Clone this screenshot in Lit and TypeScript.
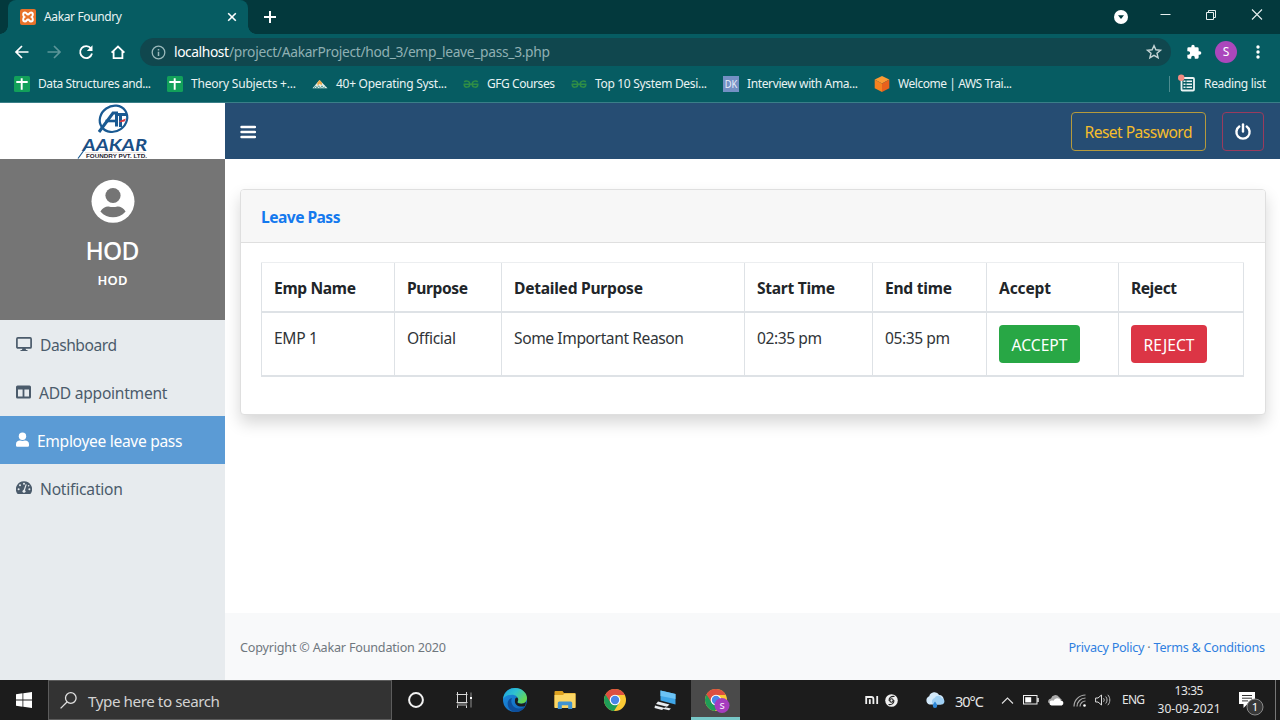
import { LitElement, html, css, svg } from "lit";
import { customElement, property } from "lit/decorators.js";
import { classMap } from "lit/directives/class-map.js";

/** A single line of text whose tracking is tuned to fill a given width. */
@customElement("ui-label")
class UiLabel extends LitElement {
  @property({ type: Number }) w = 0;
  @property() text = "";

  static styles = css`
    :host { display: inline-block; white-space: pre; }
    .t { display: inline-block; }
  `;

  updated() {
    const t = this.renderRoot.querySelector(".t") as HTMLElement;
    t.style.letterSpacing = "0px";
    const natural = t.getBoundingClientRect().width;
    const gaps = Math.max(1, this.text.length - 1);
    t.style.letterSpacing = `${(this.w - natural) / gaps}px`;
    this.style.width = `${this.w}px`;
  }

  render() {
    return html`<span class="t">${this.text}</span>`;
  }
}

const sheetIcon = svg`<rect width="16" height="16" rx="1.5" fill="#12a05a"/><path d="M2.300 6h11.400M7.700 2.300v11.400" stroke="#fff" stroke-width="1.900"/>`;
const gfgIcon = svg`<g fill="none" stroke="#2f8d46" stroke-width="1.500"><path d="M.5 8.300h15M1.300 6C2.500 4.300 6.800 4.600 6.800 8.200c0 3.700-5.200 3.900-5.600.6M14.700 6C13.500 4.300 9.200 4.600 9.200 8.200c0 3.700 5.200 3.900 5.600.6"/></g>`;
const hillIcon = svg`<path d="M0.500 12.300L7.500 4 15.500 12.300z" fill="#e8efe9"/><path d="M5.200 6.800l2.400-2.800 2.500 2.800-.5 2.500-2-1.500-2 2z" fill="#e9a94b"/><path d="M2 12.300l1.600-2.400L5 12.300l1.700-2.600 1.700 2.600 1.600-2.500 1.700 2.500 1.300-1.800" fill="none" stroke="#4f9a96" stroke-width=".9"/>`;
const dkIcon = svg`<rect width="16" height="16" fill="#7490c4"/><text x="8" y="12" text-anchor="middle" font-family="Noto Sans, sans-serif" font-size="10" textLength="12.500" lengthAdjust="spacingAndGlyphs" fill="#e8eefa">DK</text>`;
const awsIcon = svg`<path d="M8 0l7.300 3.600L8 7.400.7 3.600z" fill="#fb9a33"/><path d="M.7 3.600L8 7.400V16L.7 12.200z" fill="#f58220"/><path d="M15.300 3.600L8 7.400V16l7.300-3.800z" fill="#e8611c"/>`;

const bookmarks = [
  { icon: sheetIcon, text: "Data Structures and...", w: 113 },
  { icon: sheetIcon, text: "Theory Subjects +...", w: 105 },
  { icon: hillIcon, text: "40+ Operating Syst...", w: 111 },
  { icon: gfgIcon, text: "GFG Courses", w: 68 },
  { icon: gfgIcon, text: "Top 10 System Desi...", w: 112 },
  { icon: dkIcon, text: "Interview with Ama...", w: 111 },
  { icon: awsIcon, text: "Welcome | AWS Trai...", w: 114 },
];

@customElement("browser-chrome")
class BrowserChrome extends LitElement {
  static styles = css`
    :host { display: block; color: #e9f3f3; font: 12px/16px "Noto Sans", "Open Sans", sans-serif; }
    svg { display: block; flex: none; overflow: visible; }
    .strip { height: 34px; background: #03393d; display: flex; align-items: stretch; padding-left: 8px; }
    .tab { box-sizing: border-box; width: 240px; background: #065c62; border-radius: 8px 8px 0 0; display: flex; align-items: center; padding: 0 10px 0 12px; position: relative; }
    .tab::before, .tab::after { content: ""; position: absolute; bottom: 0; width: 8px; height: 8px; }
    .tab::before { left: -8px; background: radial-gradient(circle at 0 0, #03393d 7.5px, #065c62 8px); }
    .tab::after { right: -8px; background: radial-gradient(circle at 100% 0, #03393d 7.5px, #065c62 8px); }
    .tab ui-label { margin-left: 8px; font-size: 12px; }
    .close { margin-left: auto; }
    .plus { margin: 10px 0 0 15px; }
    .win { margin-left: auto; display: flex; }
    .slot { width: 46px; display: grid; place-items: center; height: 30px; }
    .bar { height: 36px; background: #065c62; display: flex; align-items: center; padding-left: 6px; }
    .btn { width: 32px; display: grid; place-items: center; }
    .omni { box-sizing: border-box; margin-left: 6px; width: 1031px; height: 28px; border-radius: 14px; background: #10474e; display: flex; align-items: center; padding: 0 9px 0 11px; font-size: 13.800px; color: #8fb0b3; }
    .host { margin-left: 8px; color: #fff; }
    .star { margin-left: auto; }
    .right { display: flex; align-items: center; padding-left: 7px; }
    .avatar { width: 22px; height: 22px; border-radius: 50%; background: #ab47bc; color: #fff; display: grid; place-items: center; font-size: 12px; }
    .marks { box-sizing: border-box; height: 33px; background: #065c62; border-bottom: 1px solid #3a7f88; display: flex; align-items: center; gap: 16px; padding: 0 14px 5px 14px; font-size: 12px; }
    .mark { display: flex; align-items: center; gap: 8px; }
    .reading { margin-left: auto; display: flex; align-items: center; }
    .reading ui-label { margin-left: 8px; }
    .sep { width: 1px; height: 16px; background: #4d8c90; margin-right: 8px; }
  `;

  render() {
    return html`
      <div class="strip">
        <div class="tab">
          <svg width="16" height="16" viewBox="0 0 16 16"><rect width="16" height="16" rx="2" fill="#e8722a"/><path d="M5 3.600C2.600 3.600 2.800 7 4.300 8 2.800 9 2.600 12.400 5 12.400c1.800 0 1.600-2 3-2s1.200 2 3 2c2.400 0 2.200-3.400.7-4.400 1.500-1 1.700-4.400-.7-4.400-1.800 0-1.600 2-3 2s-1.200-2-3-2z" fill="none" stroke="#fff" stroke-width="2"/></svg>
          <ui-label .w=${78} .text=${"Aakar Foundry"}></ui-label>
          <svg class="close" width="12" height="12" viewBox="0 0 12 12"><path d="M2.200 2.200l7.600 7.600M9.800 2.200L2.200 9.800" stroke="#fff" stroke-width="1.600"/></svg>
        </div>
        <svg class="plus" width="14" height="14" viewBox="0 0 14 14"><path d="M7 1v12M1 7h12" stroke="#fff" stroke-width="2"/></svg>
        <div class="win">
          <div class="slot"><svg width="14" height="14" viewBox="0 0 14 14"><circle cx="9" cy="9" r="7" fill="#fff"/><path d="M6 7.200h6L9 11z" fill="#03393d"/></svg></div>
          <div class="slot"><svg width="12" height="12" viewBox="0 0 12 12"><path d="M1.500 5.500h10" stroke="#e6efef"/></svg></div>
          <div class="slot"><svg width="12" height="12" viewBox="0 0 12 12"><path d="M1.500 3.500h7v7h-7zM3.500 3.500v-2h7v7h-2" fill="none" stroke="#e6efef"/></svg></div>
          <div class="slot"><svg width="12" height="12" viewBox="0 0 12 12"><path d="M1 .5l10 10M11 .5l-10 10" stroke="#e6efef" stroke-width="1.100"/></svg></div>
        </div>
      </div>
      <div class="bar">
        <div class="btn"><svg width="16" height="16" viewBox="0 0 16 16"><path d="M14.500 8H2.500M8 2L2 8l6 6" fill="none" stroke="#fff" stroke-width="1.700"/></svg></div>
        <div class="btn"><svg width="16" height="16" viewBox="0 0 16 16"><path d="M1.500 8h12M8 2l6 6-6 6" fill="none" stroke="#5c9599" stroke-width="1.700"/></svg></div>
        <div class="btn"><svg width="16" height="16" viewBox="0 0 16 16"><path d="M13 4.500A6 6 0 1 0 14 9.600" fill="none" stroke="#fff" stroke-width="1.800"/><path d="M14.500 1.300v5.700H8.800z" fill="#fff"/></svg></div>
        <div class="btn"><svg width="16" height="16" viewBox="0 0 16 16"><path d="M1.600 8.600L8 2.500l6.400 6.100M3.600 7.300v6.900h8.800V7.300" fill="none" stroke="#fff" stroke-width="1.800"/></svg></div>
        <div class="omni">
          <svg width="15" height="15" viewBox="0 0 15 15"><circle cx="7.500" cy="7.500" r="6.300" fill="none" stroke="#9ab9bb" stroke-width="1.300"/><path d="M7.500 6.700V11M7.500 4v1.500" stroke="#9ab9bb" stroke-width="1.500"/></svg>
          <ui-label class="host" .w=${55} .text=${"localhost"}></ui-label>
          <ui-label .w=${321} .text=${"/project/AakarProject/hod_3/emp_leave_pass_3.php"}></ui-label>
          <svg class="star" width="16" height="16" viewBox="0 0 16 16"><path d="M8 1.600l1.900 4.200 4.600.4-3.500 3 1.100 4.500L8 11.300l-4.100 2.400L5 9.200l-3.500-3 4.600-.4z" fill="none" stroke="#c3d3d4" stroke-width="1.400"/></svg>
        </div>
        <div class="right">
          <div class="btn"><svg width="16" height="16" viewBox="0 0 24 24"><path d="M20.500 11H19V7a2 2 0 0 0-2-2h-4V3.500a2.500 2.500 0 0 0-5 0V5H4a2 2 0 0 0-2 2v3.800h1.500a2.700 2.700 0 0 1 0 5.400H2V20a2 2 0 0 0 2 2h3.800v-1.500a2.700 2.700 0 0 1 5.400 0V22H17a2 2 0 0 0 2-2v-4h1.500a2.500 2.500 0 0 0 0-5z" fill="#fff"/></svg></div>
          <div class="btn"><div class="avatar">S</div></div>
          <div class="btn"><svg width="4" height="14" viewBox="0 0 4 14"><g fill="#fff"><circle cx="2" cy="2" r="1.700"/><circle cx="2" cy="7" r="1.700"/><circle cx="2" cy="12" r="1.700"/></g></svg></div>
        </div>
      </div>
      <div class="marks">
        ${bookmarks.map(
          (b) => html`<div class="mark"><svg width="16" height="16" viewBox="0 0 16 16">${b.icon}</svg><ui-label .w=${b.w} .text=${b.text}></ui-label></div>`
        )}
        <div class="reading">
          <div class="sep"></div>
          <svg width="18" height="18" viewBox="0 0 18 18"><rect x="3.500" y="3" width="12.500" height="12.500" rx="1" fill="none" stroke="#e9f3f3" stroke-width="1.800"/><path d="M5.500 6.300h2M8.500 6.300h5.500M5.500 9.300h2M8.500 9.300h5.500M5.500 12.300h2M8.500 12.300h5.500" stroke="#e9f3f3" stroke-width="1.500"/><circle cx="3.200" cy="2.700" r="3.200" fill="#f28b82"/></svg>
          <ui-label .w=${62} .text=${"Reading list"}></ui-label>
        </div>
      </div>
    `;
  }
}

const navItems = [
  { text: "Dashboard", w: 77, iw: 16, active: false, icon: svg`<rect x=".9" y="1.900" width="14.200" height="10" rx="1" fill="none" stroke="currentColor" stroke-width="1.700"/><path d="M6.500 12h3l.5 2h1.500v1h-7v-1H6z" fill="currentColor"/>` },
  { text: "ADD appointment", w: 128.5, iw: 15, active: false, icon: svg`<path fill-rule="evenodd" d="M1.500 1.600h12A1.500 1.500 0 0 1 15 3.100v9.800a1.500 1.500 0 0 1-1.500 1.500h-12A1.500 1.500 0 0 1 0 12.900V3.100a1.500 1.500 0 0 1 1.500-1.500zM2 5.500v7h4.600v-7zM8.400 5.500v7H13v-7z" fill="currentColor"/>` },
  { text: "Employee leave pass", w: 145.5, iw: 13, active: true, icon: svg`<circle cx="6.500" cy="4.300" r="3.700" fill="currentColor"/><path d="M0 13.600v-1.300C0 9.800 1.700 8.600 4 8.600c1.600.6 3.400.6 5 0 2.300 0 4 1.200 4 3.700v1.300a1.200 1.200 0 0 1-1.200 1.200H1.200A1.200 1.200 0 0 1 0 13.600z" fill="currentColor"/>` },
  { text: "Notification", w: 83, iw: 16, active: false, icon: svg`<path d="M8 1.300a8 8 0 0 0-7 12 1.200 1.200 0 0 0 1 .6h12a1.200 1.200 0 0 0 1-.6A8 8 0 0 0 8 1.300z" fill="currentColor"/><g fill="#e7ebee"><circle cx="8" cy="3.700" r="1"/><circle cx="4" cy="5.300" r="1"/><circle cx="2.600" cy="9.300" r="1"/><circle cx="13.400" cy="9.300" r="1"/><circle cx="12.600" cy="5.800" r=".8"/><circle cx="8" cy="11.300" r="1.500"/></g><path d="M8 11l2.200-6.600" stroke="#e7ebee" stroke-width="1.200"/>` },
];

@customElement("side-bar")
class SideBar extends LitElement {
  static styles = css`
    :host { display: flex; flex-direction: column; width: 225px; flex: none; background: #e7ebee; font: 15.600px/24px "Noto Sans", "Open Sans", sans-serif; color: #4b5b6b; }
    svg { display: block; flex: none; }
    .logo { height: 56px; background: #fff; display: flex; justify-content: center; }
    .user { height: 161px; box-sizing: border-box; padding-top: 20px; background: #757575; color: #fff; display: flex; flex-direction: column; align-items: center; }
    .name { font-size: 24.500px; line-height: 30px; font-weight: 500; margin-top: 13px; }
    .role { font-size: 13px; line-height: 18px; font-weight: 600; margin-top: 5px; }
    .item { height: 48px; display: flex; align-items: center; padding-left: 16px; gap: 8px; }
    .item ui-label { margin-top: 1px; }
    .active { background: #5b9bd5; color: #fff; }
  `;

  render() {
    return html`
      <div class="logo">
        <svg width="72" height="56" viewBox="0 0 72 56">
          <g fill="none" stroke="#1a5a92">
            <ellipse cx="36.500" cy="15.800" rx="14.300" ry="12.600" stroke-width="2.200" transform="rotate(-35 36.500 15.800)"/>
            <path d="M22 29L36 10h3.500v13.500" stroke-width="3"/>
            <path d="M28.500 18h12" stroke-width="2.600"/>
            <path d="M43.500 24V10.500M42 11.500h7.500M38 11.500h5" stroke-width="3"/>
          </g>
          <path d="M42.500 18l6.500-2.500-1.500 3-5 .8z" fill="#d9353f"/>
          <path d="M1 55.500L9 44.500" stroke="#1a5a92" stroke-width="1.200"/>
          <text x="5.500" y="48" font-family="Lato, sans-serif" font-style="italic" font-weight="700" font-size="17" textLength="64.500" lengthAdjust="spacingAndGlyphs" fill="#1a4f86">AAKAR</text>
          <path d="M8 49.700h60" stroke="#c9b9a8" stroke-width=".5"/>
          <text x="9" y="55.200" font-family="Liberation Sans, sans-serif" font-weight="700" font-size="5" textLength="61" lengthAdjust="spacingAndGlyphs" fill="#26222e">FOUNDRY PVT. LTD.</text>
        </svg>
      </div>
      <div class="user">
        <svg width="44" height="44" viewBox="0 0 44 44"><circle cx="22" cy="22.300" r="21.500" fill="#fff"/><circle cx="22" cy="16.500" r="7.600" fill="#757575"/><path d="M9.400 32.500C11.500 28.500 15 27.200 17.500 27.400c3 .9 6 .9 9 0 2.500-.2 6 1.100 8.100 5.100C31 36.600 26.500 38.300 22 38.300S13 36.600 9.400 32.500z" fill="#757575"/></svg>
        <ui-label class="name" .w=${54} .text=${"HOD"}></ui-label>
        <ui-label class="role" .w=${30} .text=${"HOD"}></ui-label>
      </div>
      ${navItems.map(
        (n) => html`<div class=${classMap({ item: true, active: n.active })}>
          <svg width=${n.iw} height="16" viewBox="0 0 ${n.iw} 16">${n.icon}</svg>
          <ui-label .w=${n.w} .text=${n.text}></ui-label>
        </div>`
      )}
    `;
  }
}

const columns = [
  { head: "Emp Name", hw: 82, cell: "EMP 1", cw: 44 },
  { head: "Purpose", hw: 61, cell: "Official", cw: 49 },
  { head: "Detailed Purpose", hw: 129, cell: "Some Important Reason", cw: 170 },
  { head: "Start Time", hw: 78, cell: "02:35 pm", cw: 65 },
  { head: "End time", hw: 67, cell: "05:35 pm", cw: 65 },
  { head: "Accept", hw: 52, cell: "ACCEPT", cw: 56, kind: "accept" },
  { head: "Reject", hw: 46, cell: "REJECT", cw: 51, kind: "reject" },
];

@customElement("main-panel")
class MainPanel extends LitElement {
  static styles = css`
    :host { display: flex; flex-direction: column; flex: 1; min-width: 0; background: #fff; font: 15.600px/24px "Noto Sans", "Open Sans", sans-serif; color: #212529; }
    svg { display: block; }
    .nav { height: 56px; background: #264d73; display: flex; align-items: center; padding: 0 16px 0 15px; }
    .burger { margin-top: 2px; }
    .out { box-sizing: border-box; height: 39px; border: 1px solid #b59a3c; border-radius: 4px; display: grid; place-items: center; margin-top: 1px; }
    .reset { width: 135px; margin-left: auto; color: #f5bd2b; }
    .power { width: 42px; margin-left: 16px; border-color: #9a3b5d; }
    .body { flex: 1; padding: 30px 14px 0 15px; }
    .card { box-sizing: border-box; height: 226px; border: 1px solid #dfdfdf; border-radius: 4px; background: #fff; box-shadow: 0 8px 16px rgba(0, 0, 0, 0.16); }
    .head { box-sizing: border-box; height: 53px; padding: 15px 20px 0; background: #f7f7f7; border-bottom: 1px solid #dfdfdf; border-radius: 3px 3px 0 0; color: #1479ee; font-weight: 700; }
    .table { margin: 19px 20px 0; display: grid; grid-template-columns: 133px 107px 243px 128px 114px 132px 126px; border-top: 1px solid #eceef0; width: 983px; }
    .th, .td { box-sizing: border-box; border-left: 1px solid #dee2e6; border-bottom: 2px solid #dee2e6; padding: 13px 0 0 12px; }
    .th { height: 50px; font-weight: 700; }
    .td { height: 64px; color: #303438; }
    .last { border-right: 1px solid #dee2e6; }
    .td.withbtn { padding-top: 12px; }
    .btn { height: 38px; border-radius: 4px; display: grid; place-items: center; color: #fff; }
    .btn ui-label { margin-top: 2px; }
    .accept { width: 81px; background: #28a745; }
    .reject { width: 76px; background: #dc3545; }
    .foot { height: 67px; background: #f8f9fa; display: flex; align-items: center; padding: 2px 15px 0; box-sizing: border-box; font-size: 12.600px; color: #6f777e; }
    .links { margin-left: auto; display: flex; color: #2f7fe0; }
    .dot { width: 9px; text-align: center; color: #6f777e; }
  `;

  render() {
    return html`
      <div class="nav">
        <svg class="burger" width="16" height="14" viewBox="0 0 16 14"><path d="M1.500 2h13.500M1.500 7h13.500M1.500 12h13.500" stroke="#fff" stroke-width="2.400" stroke-linecap="round"/></svg>
        <div class="out reset"><ui-label .w=${108} .text=${"Reset Password"}></ui-label></div>
        <div class="out power"><svg width="18" height="18" viewBox="0 0 18 18"><path d="M5.300 3.600a6.600 6.600 0 1 0 7.400 0" fill="none" stroke="#fff" stroke-width="2.400" stroke-linecap="round"/><path d="M9 1.500v7" stroke="#fff" stroke-width="2.400" stroke-linecap="round"/></svg></div>
      </div>
      <div class="body">
        <div class="card">
          <div class="head"><ui-label .w=${79.5} .text=${"Leave Pass"}></ui-label></div>
          <div class="table">
            ${columns.map((c, i) => html`<div class=${classMap({ th: true, last: i === 6 })}><ui-label .w=${c.hw} .text=${c.head}></ui-label></div>`)}
            ${columns.map((c, i) =>
              c.kind
                ? html`<div class=${classMap({ td: true, withbtn: true, last: i === 6 })}><div class="btn ${c.kind}"><ui-label .w=${c.cw} .text=${c.cell}></ui-label></div></div>`
                : html`<div class="td"><ui-label .w=${c.cw} .text=${c.cell}></ui-label></div>`
            )}
          </div>
        </div>
      </div>
      <div class="foot">
        <ui-label .w=${206} .text=${"Copyright © Aakar Foundation 2020"}></ui-label>
        <div class="links">
          <ui-label .w=${76} .text=${"Privacy Policy"}></ui-label><span class="dot">·</span><ui-label .w=${111.5} .text=${"Terms & Conditions"}></ui-label>
        </div>
      </div>
    `;
  }
}

const chromeLogo = svg`<circle cx="12" cy="12" r="11" fill="#fbc934"/><path d="M2.470 6.500A11 11 0 0 0 11 23l5.300-8.600L12 12z" fill="#1f9d57"/><path d="M12 6.900h9.730A11 11 0 0 0 2.470 6.500L7.600 14.600 12 12z" fill="#dd4f41"/><circle cx="12" cy="12" r="5.300" fill="#fff"/><circle cx="12" cy="12" r="4.200" fill="#4a86e8"/>`;

@customElement("task-bar")
class TaskBar extends LitElement {
  static styles = css`
    :host { display: flex; height: 40px; background: #1c1c1c; color: #e6e6e6; font: 12px/18px "Noto Sans", "Open Sans", sans-serif; }
    svg { display: block; flex: none; overflow: visible; }
    .start { width: 48px; display: grid; place-items: center; }
    .search { box-sizing: border-box; width: 344px; background: #333; border: 1px solid #5c5c5c; display: flex; align-items: center; padding-left: 11px; font-size: 15.200px; color: #d2d2d2; }
    .search ui-label { margin: 1px 0 0 11px; }
    .app { width: 50px; display: grid; place-items: center; }
    .narrow { width: 48px; }
    .edge { margin-left: 2px; }
    .active { box-sizing: border-box; width: 49px; margin-left: 1px; background: #4a4a4a; border-bottom: 3px solid #78c8c8; padding-top: 2px; }
    .tray { margin-left: auto; display: flex; align-items: center; }
    .s24 { width: 24px; display: grid; place-items: center; }
    .s20 { width: 20px; display: grid; place-items: center; }
    .weather { width: 40px; padding-left: 13px; display: grid; place-items: center; }
    .temp { font-size: 14.500px; margin: 2px 12px 0 0; }
    .lang { margin: 0 12px 0 6px; }
    .clock { width: 64px; display: flex; flex-direction: column; align-items: center; }
    .note { width: 54px; display: grid; place-items: center; }
    .end { width: 1px; height: 40px; background: #777; margin-right: 4px; }
  `;

  render() {
    return html`
      <div class="start"><svg width="16" height="16" viewBox="0 0 16 16"><path d="M0 2.200L6.500 1.300v6.300H0zM7.300 1.200L16 0v7.600H7.300zM0 8.400h6.500v6.300L0 13.800zM7.300 8.400H16V16l-8.700-1.200z" fill="#fff"/></svg></div>
      <div class="search">
        <svg width="17" height="17" viewBox="0 0 17 17"><circle cx="10.800" cy="6" r="5.300" fill="none" stroke="#e0e0e0" stroke-width="1.300"/><path d="M7 10L.6 16.400" stroke="#e0e0e0" stroke-width="1.300"/></svg>
        <ui-label .w=${132} .text=${"Type here to search"}></ui-label>
      </div>
      <div class="app narrow"><svg width="16" height="16" viewBox="0 0 16 16"><circle cx="8" cy="8" r="6.900" fill="none" stroke="#f2f2f2" stroke-width="2"/></svg></div>
      <div class="app narrow"><svg width="18" height="18" viewBox="0 0 18 18"><path d="M2 11.500h10v3.500H2z" fill="#666"/><path d="M2.500 1v2.500M11.500 1v2.500M1.500 3.500h11M2.500 3.500v8M11.500 3.500v8M1.500 11.500h11M2.500 14.500V17M11.500 14.500V17" fill="none" stroke="#d8d8d8"/><path d="M16 1.500v15" stroke="#777" stroke-width="1.300"/><path d="M16 6v2" stroke="#fff" stroke-width="2"/></svg></div>
      <div class="app edge"><svg width="24" height="24" viewBox="0 0 24 24"><defs><linearGradient id="ea" x1="0" y1="0" x2="1" y2=".6"><stop offset="0" stop-color="#1a9fe0"/><stop offset=".5" stop-color="#2fc2d0"/><stop offset="1" stop-color="#66d852"/></linearGradient><linearGradient id="eb" x1="0" y1="0" x2="1" y2="1"><stop offset="0" stop-color="#1b8fe0"/><stop offset="1" stop-color="#1262b8"/></linearGradient></defs><circle cx="12" cy="12" r="12" fill="url(#eb)"/><path d="M0 11C1 4 6 0 12 0c7 0 12 5 12 10 0 3.500-2.500 5.700-5.800 5.700-2.400 0-3.800-.8-3.800-1.600 0-.7.900-1 .9-2.700C15.300 9 12.500 6.700 9 6.700c-4 0-7.500 1.800-9 4.300z" fill="url(#ea)"/><path d="M9 10c-2 4 .5 10 6.500 10.500 3 .2 5.500-1 7-2.500-2 4-6 6-10 6C7 23.500 3.500 18 5 13.500c.6-1.800 2-3.100 4-3.500z" fill="#0e4f9c"/><path d="M14.400 14.100c0 1 2 1.600 3.800 1.600 2.200 0 3.800-.8 4.800-2-.2 2-.6 3.300-1 4.200-4 1.700-11 .3-10-5.900 0-1.300.9-2.200 1.700-2.500 2 .6 1.600 3 .7 4.600z" fill="#1c1c1c"/></svg></div>
      <div class="app"><svg width="22" height="20" viewBox="0 0 22 20"><path d="M.5 2a1 1 0 0 1 1-1h7L10 3h10.500a1 1 0 0 1 1 1V17H.5z" fill="#dda11f"/><path d="M.5 5h8.500L10.500 3.500h11v14.500H.5z" fill="#fbd665"/><path d="M3.800 19v-6A1.500 1.500 0 0 1 5.300 11.500h11.400a1.500 1.500 0 0 1 1.500 1.500v6h-4v-3.800h-6.400V19z" fill="#3f93d2"/></svg></div>
      <div class="app"><svg width="24" height="24" viewBox="0 0 24 24">${chromeLogo}</svg></div>
      <div class="app"><svg width="22" height="22" viewBox="0 0 22 22"><path d="M6.500 1.500l15 3.500v10.500L6.500 11.500z" fill="#3fa6e8"/><path d="M6.500 1.500l15 3.500v5L6.500 7z" fill="#6cc3f5"/><path d="M4 12.500l11.500 3-2.500 2.300-11-2.800zM11 18.300l6 1.200-2 1.700-5.500-1.200zM1 16.500l6 1.500 3.500 1-2.500 2-7.500-2z" fill="#e8ecef"/></svg></div>
      <div class="app active"><svg width="24" height="24" viewBox="0 0 24 24">${chromeLogo}<circle cx="18" cy="17.500" r="7.500" fill="#a53cbe"/><text x="18" y="21" text-anchor="middle" font-family="Noto Sans, sans-serif" font-size="9.500" font-weight="600" fill="#f1dcf6">S</text></svg></div>
      <div class="tray">
        <div class="s20"><svg width="13" height="8" viewBox="0 0 13 8"><path d="M.2 8V1h5.200a2 2 0 0 1 2 2v5M3.800 3.300V8M11.200 0v8" fill="none" stroke="#f0f0f0" stroke-width="1.800"/></svg></div>
        <div class="s20"><svg width="13" height="13" viewBox="0 0 13 13"><g transform="translate(-1 0)"><circle cx="6.500" cy="6.500" r="6.300" fill="#f0f0f0"/><circle cx="6.500" cy="6.500" r="1.700" fill="none" stroke="#222" stroke-width="1.100"/><path d="M9.500 2.500C6 2 3.500 4 4.200 7M3.500 10.500C7 11 9.500 9 8.800 6" fill="none" stroke="#222" stroke-width="1.100"/></g></svg></div>
        <div class="weather"><svg width="20" height="16" viewBox="0 0 20 16"><path d="M4.500 12.500a4.400 4.400 0 0 1-.3-8.300A5.500 5.500 0 0 1 14.200 3a4.900 4.900 0 0 1 1.300 9.500z" fill="#d3e9fa"/><path d="M8 12.500A4 4 0 0 1 9.500 6a4.200 4.200 0 0 1 7.500.3c3 .5 3.500 5.200 0 6.200z" fill="#9fd0f4"/><path d="M10 9.500c1.400 2 2.200 3 2.200 4.200a2.200 2.200 0 0 1-4.400 0c0-1.200.8-2.200 2.200-4.200z" fill="#2d87d8"/></svg></div>
        <ui-label class="temp" .w=${29} .text=${"30°C"}></ui-label>
        <div class="s24"><svg width="12" height="7" viewBox="0 0 12 7"><path d="M0 6.500L5.500 1 11 6.500" fill="none" stroke="#e0e0e0" stroke-width="1.100"/></svg></div>
        <div class="s24"><svg width="16" height="10" viewBox="0 0 16 10"><rect x="-.5" y=".5" width="13.500" height="8.500" fill="none" stroke="#eee"/><path d="M1.200 2.200h6v5.200h-6z" fill="#fff"/><path d="M14 3v4" stroke="#eee" stroke-width="1.500"/></svg></div>
        <div class="s24"><svg width="16" height="11" viewBox="-.5 0 16 11"><path d="M0 8a3 3 0 0 1 2.500-4.500A4.500 4.500 0 0 1 10.500 2l3 3z" fill="#a9a9a9"/><path d="M3 10.500a2.600 2.600 0 0 1 0-5.100c1 0 1.500.1 2 .3a4 4 0 0 1 7.300-.2 2.600 2.600 0 0 1 1 5z" fill="#fff"/></svg></div>
        <div class="s24"><svg width="13" height="13" viewBox="0 0 13 13"><g transform="translate(-1 0)"><g fill="none" stroke="#aaa" stroke-width="1.200"><path d="M1 12.500A11.500 11.500 0 0 1 12.500 1M4 12.500A8.500 8.500 0 0 1 12.500 4M7 12.500A5.500 5.500 0 0 1 12.500 7"/></g><circle cx="11.500" cy="11.500" r="1.300" fill="#fff"/></g></svg></div>
        <div class="s24"><svg width="16" height="12" viewBox="1 0 16 12"><path d="M.6 4v4h2.400L6.500 11V1L3 4z" fill="none" stroke="#ddd"/><path d="M8.500 4.200c.9 1 .9 2.600 0 3.600M10.700 2.500c1.800 2 1.800 5 0 7M12.800.8c2.700 3 2.700 7.400 0 10.400" fill="none" stroke="#bbb"/></svg></div>
        <ui-label class="lang" .w=${23} .text=${"ENG"}></ui-label>
        <div class="clock"><ui-label .w=${29} .text=${"13:35"}></ui-label><ui-label .w=${63} .text=${"30-09-2021"}></ui-label></div>
        <div class="note"><svg width="18" height="18" viewBox="0 0 18 18"><path d="M0 1h16v12H8.500l-4 4v-4H0z" fill="#fff"/><path d="M3 4.500h10M3 7.200h10M3 9.900h6" stroke="#333"/><circle cx="16" cy="16" r="8" fill="#383838" stroke="#8a8a8a"/><text x="16" y="20.300" text-anchor="middle" font-family="Noto Sans, sans-serif" font-size="11.500" fill="#fff">1</text></svg></div>
        <div class="end"></div>
      </div>
    `;
  }
}

@customElement("app-root")
class AppRoot extends LitElement {
  static styles = css`
    :host { display: flex; flex-direction: column; width: 1280px; height: 720px; overflow: hidden; }
    .page { flex: 1; display: flex; min-height: 0; }
  `;

  render() {
    return html`
      <browser-chrome></browser-chrome>
      <div class="page"><side-bar></side-bar><main-panel></main-panel></div>
      <task-bar></task-bar>
    `;
  }
}
